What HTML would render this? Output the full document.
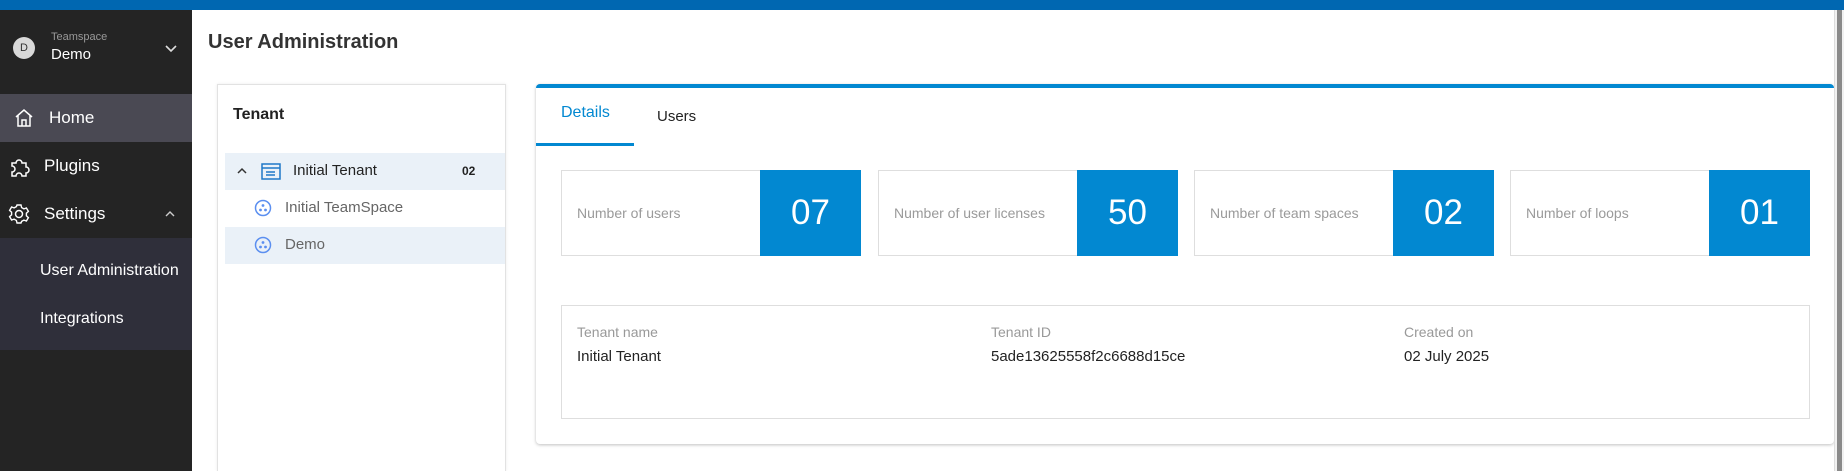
<!DOCTYPE html>
<html><head><meta charset="utf-8"><style>
*{box-sizing:border-box;margin:0;padding:0}
html,body{width:1844px;height:471px;overflow:hidden}
body{background:#fff;font-family:"Liberation Sans",sans-serif;position:relative}
.abs{position:absolute}
.top{left:0;top:0;width:1844px;height:10px;background:#0067b1}
.side{left:0;top:10px;width:192px;height:461px;background:#242424}
.sb{right:0;top:10px;width:10px;height:461px;background:#f1f1f1;border-left:1px solid #ddd}
.sb div{position:absolute;left:2px;top:0;width:5px;height:461px;background:#8a8a8a}
.nav{color:#fff;font-size:17px}
.stat{top:170px;height:86px;width:300px;border:1px solid #dedede;background:#fff}
.stat .l{position:absolute;left:15px;top:0;line-height:84px;font-size:14px;color:#9a9a9a}
.stat .n{position:absolute;right:-1px;top:-1px;width:101px;height:86px;background:#0288d1;color:#fff;font-size:35px;text-align:center;line-height:86px}
.lab{font-size:14px;color:#999;top:324px}
.val{font-size:15px;color:#222;top:348px}
</style></head><body>
<div class="abs top"></div>
<div class="abs side">
  <div class="abs" style="left:13px;top:27px;width:22px;height:22px;border-radius:50%;background:#d9d9d9;color:#333;font-size:11px;text-align:center;line-height:22px">D</div>
  <div class="abs" style="left:51px;top:21px;font-size:11px;color:#999">Teamspace</div>
  <div class="abs" style="left:51px;top:36px;font-size:15px;color:#fff">Demo</div>
  <svg class="abs" style="left:164px;top:34px" width="14" height="10"><path d="M2 2l5 5 5-5" stroke="#ddd" stroke-width="1.6" fill="none"/></svg>
  <div class="abs" style="left:0;top:84px;width:192px;height:48px;background:#4a4953"></div>
  <svg class="abs" style="left:13px;top:97px" width="22" height="22"><path d="M3 10L11 3l8 7M5 8v11h12V8M9 19v-6h4v6" stroke="#fff" stroke-width="1.5" fill="none"/></svg>
  <div class="abs nav" style="left:49px;top:98px">Home</div>
  <svg class="abs" style="left:8px;top:145px" width="22" height="22"><path d="M4 8h4a3 3 0 0 1 6 0h4v4a3 3 0 0 1 0 6v3H14a3 3 0 0 0-6 0H4v-4a3 3 0 0 0 0-6z" stroke="#fff" stroke-width="1.5" fill="none"/></svg>
  <div class="abs nav" style="left:44px;top:146px">Plugins</div>
  <svg class="abs" style="left:8px;top:193px" width="22" height="22"><circle cx="11" cy="11" r="3.5" stroke="#fff" stroke-width="1.5" fill="none"/><path d="M9 2h4l.6 2.6 2.3 1.3 2.5-.9 2 3.4-2 1.8v2.6l2 1.8-2 3.4-2.5-.9-2.3 1.3L13 20H9l-.6-2.6-2.3-1.3-2.5.9-2-3.4 2-1.8V9.2l-2-1.8 2-3.4 2.5.9 2.3-1.3z" stroke="#fff" stroke-width="1.4" fill="none"/></svg>
  <div class="abs nav" style="left:44px;top:194px">Settings</div>
  <svg class="abs" style="left:164px;top:200px" width="12" height="8"><path d="M2 6l4-4 4 4" stroke="#ccc" stroke-width="1.4" fill="none"/></svg>
  <div class="abs" style="left:0;top:228px;width:192px;height:112px;background:#2f2f3a"></div>
  <div class="abs nav" style="left:40px;top:252px;font-size:16px">User Administration</div>
  <div class="abs nav" style="left:40px;top:300px;font-size:16px">Integrations</div>
</div>
<div class="abs" style="left:208px;top:31px;font-size:20px;font-weight:bold;color:#333">User Administration</div>
<!-- tenant panel -->
<div class="abs" style="left:217px;top:84px;width:289px;height:387px;border:1px solid #e2e2e2;border-bottom:none;box-shadow:0 0 3px rgba(0,0,0,.08)"></div>
<div class="abs" style="left:233px;top:106px;font-size:16px;font-weight:bold;color:#222">Tenant</div>
<div class="abs" style="left:225px;top:153px;width:280px;height:37px;background:#eaf1f8"></div>
<svg class="abs" style="left:236px;top:166px" width="12" height="9"><path d="M2 7l4-4 4 4" stroke="#333" stroke-width="1.5" fill="none"/></svg>
<svg class="abs" style="left:261px;top:163px" width="20" height="17"><rect x="1" y="1" width="18" height="15" stroke="#1e78c8" stroke-width="1.5" fill="none"/><path d="M1 5h18M5 9h9M5 12h9" stroke="#1e78c8" stroke-width="1.4"/></svg>
<div class="abs" style="left:293px;top:162px;font-size:15px;color:#222">Initial Tenant</div>
<div class="abs" style="left:462px;top:164px;font-size:12px;font-weight:bold;color:#222">02</div>
<div class="abs" style="left:225px;top:227px;width:280px;height:37px;background:#eaf1f8"></div>
<svg class="abs" style="left:254px;top:199px" width="18" height="18"><circle cx="9" cy="9" r="7.5" stroke="#5b8ff0" stroke-width="1.5" fill="none"/><circle cx="9" cy="6.5" r="1.4" fill="#5b8ff0"/><circle cx="6.5" cy="11" r="1.4" fill="#5b8ff0"/><circle cx="11.5" cy="11" r="1.4" fill="#5b8ff0"/></svg>
<div class="abs" style="left:285px;top:199px;font-size:15px;color:#666">Initial TeamSpace</div>
<svg class="abs" style="left:254px;top:236px" width="18" height="18"><circle cx="9" cy="9" r="7.5" stroke="#5b8ff0" stroke-width="1.5" fill="none"/><circle cx="9" cy="6.5" r="1.4" fill="#5b8ff0"/><circle cx="6.5" cy="11" r="1.4" fill="#5b8ff0"/><circle cx="11.5" cy="11" r="1.4" fill="#5b8ff0"/></svg>
<div class="abs" style="left:285px;top:236px;font-size:15px;color:#666">Demo</div>
<!-- card -->
<div class="abs" style="left:536px;top:84px;width:1298px;height:360px;border-radius:4px;border-top:4px solid #0288d1;box-shadow:0 1px 3px rgba(0,0,0,.25);background:#fff"></div>
<div class="abs" style="left:561px;top:104px;font-size:16px;color:#0288d1">Details</div>
<div class="abs" style="left:536px;top:143px;width:98px;height:3px;background:#0288d1"></div>
<div class="abs" style="left:657px;top:108px;font-size:15px;color:#222">Users</div>
<div class="abs stat" style="left:561px"><div class="l">Number of users</div><div class="n">07</div></div>
<div class="abs stat" style="left:878px"><div class="l">Number of user licenses</div><div class="n">50</div></div>
<div class="abs stat" style="left:1194px"><div class="l">Number of team spaces</div><div class="n">02</div></div>
<div class="abs stat" style="left:1510px"><div class="l">Number of loops</div><div class="n">01</div></div>
<div class="abs" style="left:561px;top:305px;width:1249px;height:114px;border:1px solid #dedede"></div>
<div class="abs lab" style="left:577px">Tenant name</div>
<div class="abs lab" style="left:991px">Tenant ID</div>
<div class="abs lab" style="left:1404px">Created on</div>
<div class="abs val" style="left:577px">Initial Tenant</div>
<div class="abs val" style="left:991px">5ade13625558f2c6688d15ce</div>
<div class="abs val" style="left:1404px">02 July 2025</div>
<div class="abs sb"><div></div></div>
</body></html>
